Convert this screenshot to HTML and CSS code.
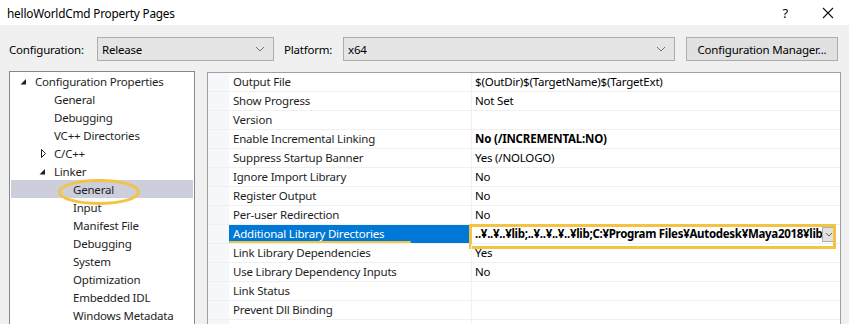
FILE: index.html
```html
<!DOCTYPE html>
<html lang="en">

<head>
    <meta charset="UTF-8">
    <title>helloWorldCmd Property Pages</title>
    <link rel="stylesheet" href="styles.css">
</head>

<body>

    <div class="titlebar">
        <span class="title">helloWorldCmd Property Pages</span>
        <span class="help">?</span>
        <svg class="close" width="12" height="12" viewBox="0 0 12 12">
            <path d="M1 1 L11 11 M11 1 L1 11" stroke="#111" stroke-width="1.1" fill="none"/>
        </svg>
    </div>

    <div class="toolbar">
        <span class="label label-config">Configuration:</span>
        <div class="combo combo-config">
            <span>Release</span>
            <svg class="chevron" width="10" height="6" viewBox="0 0 10 6"><path d="M1 1 L5 5 L9 1" stroke="#707070" fill="none"/></svg>
        </div>
        <span class="label label-platform">Platform:</span>
        <div class="combo combo-platform">
            <span>x64</span>
            <svg class="chevron" width="10" height="6" viewBox="0 0 10 6"><path d="M1 1 L5 5 L9 1" stroke="#707070" fill="none"/></svg>
        </div>
        <button class="btn-manager">Configuration Manager...</button>
    </div>

    <div class="main">
        <div class="tree">
            <div class="node lvl0">
                <svg class="arrow" width="15" height="18" viewBox="0 0 15 18"><polygon points="0.5,12.5 6,7 6,12.5" fill="#1e1e1e"/></svg>
                <span>Configuration Properties</span>
            </div>
            <div class="node lvl1"><span class="gap"></span><span>General</span></div>
            <div class="node lvl1"><span class="gap"></span><span>Debugging</span></div>
            <div class="node lvl1"><span class="gap"></span><span>VC++ Directories</span></div>
            <div class="node lvl1">
                <svg class="arrow" width="15" height="18" viewBox="0 0 15 18"><polygon points="2.5,5.5 6.5,9.5 2.5,13.5" fill="none" stroke="#1e1e1e"/></svg>
                <span>C/C++</span>
            </div>
            <div class="node lvl1">
                <svg class="arrow" width="15" height="18" viewBox="0 0 15 18"><polygon points="0.5,12.5 6,7 6,12.5" fill="#1e1e1e"/></svg>
                <span>Linker</span>
            </div>
            <div class="node lvl2 selected"><span class="gap"></span><span>General</span></div>
            <div class="node lvl2"><span class="gap"></span><span>Input</span></div>
            <div class="node lvl2"><span class="gap"></span><span>Manifest File</span></div>
            <div class="node lvl2"><span class="gap"></span><span>Debugging</span></div>
            <div class="node lvl2"><span class="gap"></span><span>System</span></div>
            <div class="node lvl2"><span class="gap"></span><span>Optimization</span></div>
            <div class="node lvl2"><span class="gap"></span><span>Embedded IDL</span></div>
            <div class="node lvl2"><span class="gap"></span><span>Windows Metadata</span></div>

            <!-- hand drawn mark round the selected item -->
            <svg class="mark-ellipse" width="84" height="28" viewBox="0 0 84 28">
                <ellipse cx="42" cy="14" rx="39.5" ry="11.5" fill="none" stroke="#f5c343" stroke-width="3"/>
            </svg>
        </div>

        <div class="grid">
            <div class="row"><div class="strip"></div><div class="name">Output File</div><div class="value">$(OutDir)$(TargetName)$(TargetExt)</div></div>
            <div class="row"><div class="strip"></div><div class="name">Show Progress</div><div class="value">Not Set</div></div>
            <div class="row"><div class="strip"></div><div class="name">Version</div><div class="value"></div></div>
            <div class="row"><div class="strip"></div><div class="name">Enable Incremental Linking</div><div class="value bold">No (/INCREMENTAL:NO)</div></div>
            <div class="row"><div class="strip"></div><div class="name">Suppress Startup Banner</div><div class="value">Yes (/NOLOGO)</div></div>
            <div class="row"><div class="strip"></div><div class="name">Ignore Import Library</div><div class="value">No</div></div>
            <div class="row"><div class="strip"></div><div class="name">Register Output</div><div class="value">No</div></div>
            <div class="row"><div class="strip"></div><div class="name">Per-user Redirection</div><div class="value">No</div></div>
            <div class="row active">
                <div class="strip"></div>
                <div class="name">Additional Library Directories<span class="mark-line"></span></div>
                <div class="value bold">
                    <span class="value-text">..¥..¥..¥lib;..¥..¥..¥..¥lib;C:¥Program Files¥Autodesk¥Maya2018¥lib</span>
                    <span class="drop">
                        <svg width="8" height="5" viewBox="0 0 8 5"><path d="M1 1 L4 4 L7 1" stroke="#606060" fill="none"/></svg>
                    </span>
                    <span class="mark-box"></span>
                </div>
            </div>
            <div class="row"><div class="strip"></div><div class="name">Link Library Dependencies</div><div class="value">Yes</div></div>
            <div class="row"><div class="strip"></div><div class="name">Use Library Dependency Inputs</div><div class="value">No</div></div>
            <div class="row"><div class="strip"></div><div class="name">Link Status</div><div class="value"></div></div>
            <div class="row"><div class="strip"></div><div class="name">Prevent Dll Binding</div><div class="value"></div></div>
            <div class="row"><div class="strip"></div><div class="name"></div><div class="value"></div></div>
        </div>
    </div>

</body>

</html>
```

FILE: styles.css
```css
body {
    font-family: 'Noto Sans', 'Open Sans', sans-serif;
    font-size: 11.5px;
    letter-spacing: -0.2px;
    margin: 0;
    padding: 0;
    background-color: #f0f0f0;
    color: #1e1e1e;
    height: 324px;
    overflow: hidden;
}

/* title bar */

.titlebar {
    display: flex;
    align-items: center;
    height: 25px;
    background-color: white;
    color: #000;
}

.title {
    margin-left: 7px;
    flex-grow: 1;
    font-size: 11.8px;
}

.help {
    font-size: 13px;
    margin-right: 34px;
}

.close {
    margin-right: 15px;
}

/* configuration row */

.toolbar {
    display: flex;
    align-items: center;
    height: 24px;
    padding: 12px 0 10px 9px;
}

.label {
    color: #000;
}

.label-config {
    width: 88px;
}

.label-platform {
    width: 59px;
    margin-left: 10px;
}

.combo {
    display: flex;
    align-items: center;
    justify-content: space-between;
    box-sizing: border-box;
    height: 24px;
    padding: 0 8px 0 4px;
    background-color: #e5e5e5;
    border: 1px solid #adadad;
    color: #000;
}

.combo-config {
    width: 177px;
}

.combo-platform {
    width: 332px;
}

.btn-manager {
    box-sizing: border-box;
    width: 152px;
    height: 24px;
    margin-left: 11px;
    padding: 0;
    font-family: inherit;
    font-size: 11.5px;
    letter-spacing: -0.2px;
    color: #000;
    background-color: #e1e1e1;
    border: 1px solid #adadad;
}

/* main area */

.main {
    display: flex;
    gap: 12px;
    padding-left: 9px;
}

.tree {
    position: relative;
    box-sizing: border-box;
    width: 186px;
    height: 260px;
    padding: 0 1px;
    background-color: white;
    border: 1px solid #828790;
}

.node {
    display: flex;
    align-items: center;
    height: 18px;
    white-space: nowrap;
}

.lvl0 {
    padding-left: 9px;
}

.lvl1 {
    padding-left: 28px;
}

.lvl2 {
    padding-left: 47px;
}

.arrow,
.gap {
    display: block;
    width: 15px;
    flex-shrink: 0;
}

.selected {
    background-color: #cccedb;
}

.mark-ellipse {
    position: absolute;
    left: 47px;
    top: 106px;
}

.grid {
    box-sizing: border-box;
    width: 634px;
    height: 260px;
    margin-top: 1px;
    background-color: white;
    border: 1px solid #a0a0a0;
    overflow: hidden;
}

.row {
    display: flex;
    box-sizing: border-box;
    height: 19px;
    border-bottom: 1px solid #f0f0f0;
}

.strip {
    width: 21px;
    flex-shrink: 0;
    background-color: #f5f7fb;
}

.name {
    position: relative;
    box-sizing: border-box;
    width: 243px;
    flex-shrink: 0;
    padding-left: 4px;
    line-height: 18px;
    border-right: 1px solid #f0f0f0;
    white-space: nowrap;
}

.value {
    position: relative;
    flex-grow: 1;
    padding-left: 3px;
    line-height: 18px;
    white-space: nowrap;
    color: #000;
}

.bold {
    font-weight: bold;
}

.active .name {
    background-color: #0078d7;
    color: white;
}

.value-text {
    display: block;
    width: 347px;
    letter-spacing: -0.3px;
    overflow: hidden;
}

.drop {
    position: absolute;
    top: 2px;
    right: 4px;
    box-sizing: border-box;
    width: 14px;
    height: 15px;
    display: flex;
    align-items: center;
    justify-content: center;
    background-color: #e1e1e1;
    border: 1px solid #adadad;
}

/* yellow hand drawn marks */

.mark-line {
    position: absolute;
    left: 0;
    top: 16px;
    width: 182px;
    height: 2px;
    background-color: #f5c343;
    border-radius: 1px;
}

.mark-box {
    position: absolute;
    left: -3px;
    top: -1px;
    width: 367px;
    height: 25px;
    box-sizing: border-box;
    border: 3px solid #f5c343;
}
```
